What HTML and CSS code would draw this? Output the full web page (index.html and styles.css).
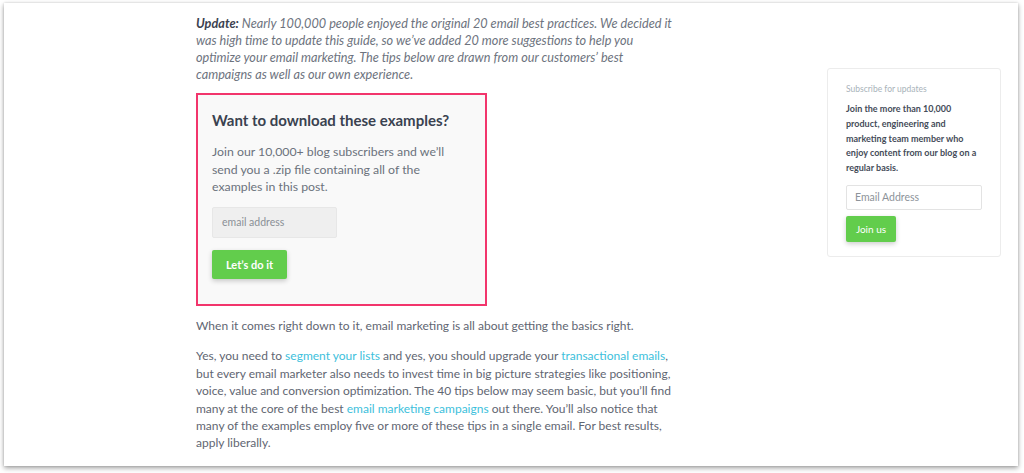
FILE: index.html
```html
<!DOCTYPE html>
<html lang="en">
<head>
<meta charset="utf-8">
<title>Email best practices</title>
<link rel="stylesheet" href="styles.css">
</head>
<body>
<div class="window">
  <main class="main">
    <p class="update"><strong>Update:</strong> Nearly 100,000 people enjoyed the original 20 email best practices. We decided it was high time to update this guide, so we’ve added 20 more suggestions to help you optimize your email marketing. The tips below are drawn from our customers’ best campaigns as well as our own experience.</p>
    <section class="download">
      <h2 class="download-title">Want to download these examples?</h2>
      <p class="download-text">Join our 10,000+ blog subscribers and we’ll send you a .zip file containing all of the examples in this post.</p>
      <div class="download-input">email address</div>
      <button class="btn btn-download">Let’s do it</button>
    </section>
    <p class="body-text">When it comes right down to it, email marketing is all about getting the basics right.</p>
    <p class="body-text">Yes, you need to <a href="#">segment your lists</a> and yes, you should upgrade your <a href="#">transactional emails</a>, but every email marketer also needs to invest time in big picture strategies like positioning, voice, value and conversion optimization. The 40 tips below may seem basic, but you’ll find many at the core of the best <a href="#">email marketing campaigns</a> out there. You’ll also notice that many of the examples employ five or more of these tips in a single email. For best results, apply liberally.</p>
  </main>
  <aside class="sidebar">
    <div class="card">
      <div class="card-label">Subscribe for updates</div>
      <p class="card-text">Join the more than 10,000 product, engineering and marketing team member who enjoy content from our blog on a regular basis.</p>
      <div class="card-input">Email Address</div>
      <button class="btn btn-join">Join us</button>
    </div>
  </aside>
</div>
</body>
</html>
```
FILE: styles.css
```css
* { box-sizing: border-box; }
html, body { margin: 0; padding: 0; }
body {
  background: #ffffff;
  font-family: Lato, "Open Sans", sans-serif;
  width: 1024px;
  height: 473px;
  overflow: hidden;
}
.window {
  margin: 3px 6px 0 4px;
  height: 463px;
  background: #ffffff;
  box-shadow: 0 2px 5px rgba(0, 0, 0, 0.38), 0 0 2px rgba(0, 0, 0, 0.12);
  display: flex;
  align-items: flex-start;
  overflow: hidden;
}
.main {
  margin-left: 192px;
  width: 482px;
  padding-top: 12px;
  color: #5f6672;
  font-size: 12px;
  line-height: 17.4px;
}
.update {
  margin: 0;
  font-style: italic;
  font-size: 12.7px;
  line-height: 17.1px;
  color: #6d737e;
}
.update strong { color: #3b4250; font-weight: 700; }
.download {
  margin-top: 10px;
  width: 291px;
  border: 2px solid #f2356c;
  background: #f9f9f9;
  padding: 15px 16px 25px 14px;
}
.download-title {
  margin: 0;
  font-size: 15px;
  line-height: 20px;
  font-weight: 700;
  color: #3a4250;
}
.download-text {
  margin: 13px 0 0;
  font-size: 12.3px;
  color: #6b727c;
  line-height: 17.2px;
}
.download-input {
  margin-top: 12px;
  width: 125px;
  height: 31px;
  background: #efefef;
  border: 1px solid #e7e7e7;
  border-radius: 2px;
  padding: 0 9px;
  display: flex;
  align-items: center;
  font-size: 10.5px;
  color: #8a8f96;
}
.btn {
  display: flex;
  align-items: center;
  justify-content: center;
  border: 0;
  border-radius: 2px;
  background: #62cd4c;
  color: #ffffff;
  font-family: Lato, "Open Sans", sans-serif;
  box-shadow: 0 2px 5px rgba(0, 0, 0, 0.2);
  padding: 0;
}
.btn-download {
  margin-top: 12px;
  width: 75px;
  height: 29px;
  font-size: 11px;
  font-weight: 700;
}
.body-text { margin: 13px 0 0; }
.download + .body-text { margin-top: 11px; }
.body-text a { color: #3dbfdc; text-decoration: none; }
.sidebar {
  margin-left: 149px;
  margin-top: 65px;
  width: 174px;
}
.card {
  border: 1px solid #ececec;
  border-radius: 3px;
  padding: 14px 18px 14px 18px;
}
.card-label {
  font-size: 8.5px;
  line-height: 12px;
  color: #a9b3ba;
}
.card-text {
  margin: 7px 0 0;
  font-size: 9px;
  line-height: 14.8px;
  font-weight: 700;
  color: #454c59;
}
.card-input {
  margin-top: 9px;
  width: 136px;
  height: 25px;
  border: 1px solid #e3e3e3;
  border-radius: 2px;
  background: #ffffff;
  padding: 0 8px;
  display: flex;
  align-items: center;
  font-size: 10.5px;
  color: #8d939a;
}
.btn-join {
  margin-top: 6px;
  width: 50px;
  height: 26px;
  font-size: 10px;
  font-weight: 400;
}
```
